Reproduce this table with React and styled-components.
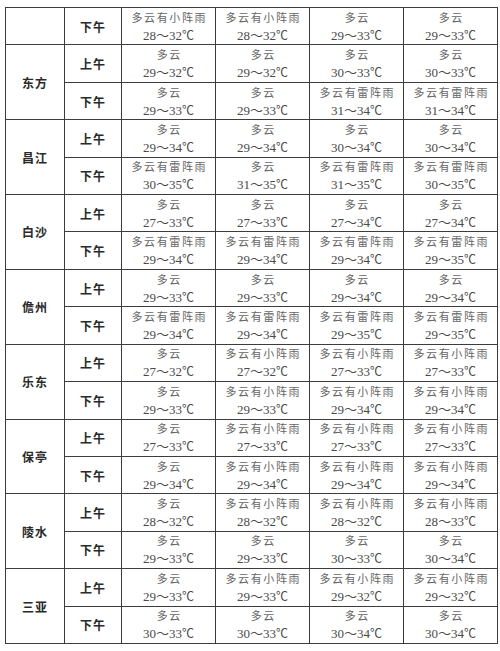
import React from 'react';
import styled, { createGlobalStyle } from 'styled-components';

const Global = createGlobalStyle`
  html, body {
    margin: 0;
    padding: 0;
    background: #ffffff;
  }
  body {
    padding: 7px 0 0 5px;
    font-family: "Liberation Serif", "Noto Sans CJK SC", serif;
  }
`;

const Grid = styled.div`
  display: grid;
  grid-template-columns: 58px 56px repeat(4, 93px);
  grid-template-rows: repeat(17, 1fr);
  gap: 1px;
  padding: 1px;
  width: 493px;
  height: 637px;
  box-sizing: border-box;
  background: #3c3c3c;
`;

const Cell = styled.div`
  background: #fff;
  display: flex;
  flex-direction: column;
  align-items: center;
  justify-content: center;
  grid-row: span ${p => p.$span || 1};
`;

const Label = styled(Cell)`
  font-family: "Noto Sans CJK SC", sans-serif;
  font-weight: 700;
  font-size: 12px;
  letter-spacing: 1px;
  color: #2a2a2a;
`;

const Weather = styled.span`
  font-family: "Noto Sans CJK SC", sans-serif;
  font-size: 11px;
  letter-spacing: 1.6px;
  line-height: 17px;
  color: #666;
  padding-left: 1.6px;
`;

const Temp = styled.span`
  font-family: "Liberation Serif", "Noto Sans CJK SC", serif;
  font-size: 13px;
  line-height: 17px;
  color: #4a4a4a;
`;

const Unit = styled.span`
  font-family: "Noto Sans CJK SC", sans-serif;
  font-size: 12px;
`;

const cities = [
  {
    name: '东方',
    am: [['多云', '29～32'], ['多云', '29～32'], ['多云', '30～33'], ['多云', '30～33']],
    pm: [['多云', '29～33'], ['多云', '29～33'], ['多云有雷阵雨', '31～34'], ['多云有雷阵雨', '31～34']],
  },
  {
    name: '昌江',
    am: [['多云', '29～34'], ['多云', '29～34'], ['多云', '30～34'], ['多云', '30～34']],
    pm: [['多云有雷阵雨', '30～35'], ['多云', '31～35'], ['多云有雷阵雨', '31～35'], ['多云有雷阵雨', '30～35']],
  },
  {
    name: '白沙',
    am: [['多云', '27～33'], ['多云', '27～33'], ['多云', '27～34'], ['多云', '27～34']],
    pm: [['多云有雷阵雨', '29～34'], ['多云有雷阵雨', '29～34'], ['多云有雷阵雨', '29～34'], ['多云有雷阵雨', '29～35']],
  },
  {
    name: '儋州',
    am: [['多云', '29～33'], ['多云', '29～33'], ['多云', '29～34'], ['多云', '29～34']],
    pm: [['多云有雷阵雨', '29～34'], ['多云有雷阵雨', '29～34'], ['多云有雷阵雨', '29～35'], ['多云有雷阵雨', '29～35']],
  },
  {
    name: '乐东',
    am: [['多云', '27～32'], ['多云有小阵雨', '27～32'], ['多云有小阵雨', '27～33'], ['多云有小阵雨', '27～33']],
    pm: [['多云', '29～33'], ['多云有小阵雨', '29～33'], ['多云有小阵雨', '29～34'], ['多云有小阵雨', '29～34']],
  },
  {
    name: '保亭',
    am: [['多云', '27～33'], ['多云有小阵雨', '27～33'], ['多云有小阵雨', '27～33'], ['多云有小阵雨', '27～33']],
    pm: [['多云', '29～34'], ['多云有小阵雨', '29～34'], ['多云有小阵雨', '29～34'], ['多云有小阵雨', '29～34']],
  },
  {
    name: '陵水',
    am: [['多云', '28～32'], ['多云有小阵雨', '28～32'], ['多云有小阵雨', '28～32'], ['多云有小阵雨', '28～33']],
    pm: [['多云', '29～33'], ['多云', '29～33'], ['多云', '30～33'], ['多云', '30～34']],
  },
  {
    name: '三亚',
    am: [['多云', '29～33'], ['多云有小阵雨', '29～33'], ['多云有小阵雨', '29～32'], ['多云有小阵雨', '29～32']],
    pm: [['多云', '30～33'], ['多云', '30～33'], ['多云', '30～34'], ['多云', '30～34']],
  },
];

const firstRow = [['多云有小阵雨', '28～32'], ['多云有小阵雨', '28～32'], ['多云', '29～33'], ['多云', '29～33']];

const DataCells = ({ items, k }) =>
  items.map(([w, t], i) => (
    <Cell key={`${k}-${i}`}>
      <Weather>{w}</Weather>
      <Temp>
        {t}
        <Unit>℃</Unit>
      </Temp>
    </Cell>
  ));

export default function App() {
  return (
    <>
      <Global />
      <Grid>
        <Cell />
        <Label>下午</Label>
        <DataCells items={firstRow} k="top" />
        {cities.map(c => (
          <React.Fragment key={c.name}>
            <Label $span={2}>{c.name}</Label>
            <Label>上午</Label>
            <DataCells items={c.am} k={`${c.name}-am`} />
            <Label>下午</Label>
            <DataCells items={c.pm} k={`${c.name}-pm`} />
          </React.Fragment>
        ))}
      </Grid>
    </>
  );
}
